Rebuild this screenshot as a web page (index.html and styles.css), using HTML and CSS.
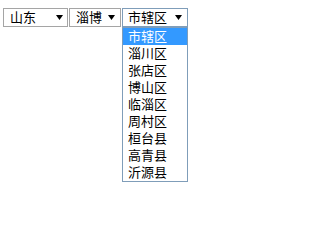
FILE: index.html
```html
<!DOCTYPE html>
<html lang="zh-CN">
<head>
<meta charset="utf-8">
<title>省市区选择</title>
<link rel="stylesheet" href="styles.css">
</head>
<body>
<div class="row">
  <div class="sel sel-prov">
    <span class="val">山东</span>
    <svg class="arrow" width="7" height="5" viewBox="0 0 7 5"><polygon points="0,0 7,0 3.5,5" fill="#000"/></svg>
  </div>
  <div class="sel sel-city">
    <span class="val">淄博</span>
    <svg class="arrow" width="7" height="5" viewBox="0 0 7 5"><polygon points="0,0 7,0 3.5,5" fill="#000"/></svg>
  </div>
  <div class="combo">
    <div class="sel sel-dist focused">
      <span class="val">市辖区</span>
      <svg class="arrow" width="7" height="5" viewBox="0 0 7 5"><polygon points="0,0 7,0 3.5,5" fill="#000"/></svg>
    </div>
    <div class="list">
      <div class="item active">市辖区</div>
      <div class="item">淄川区</div>
      <div class="item">张店区</div>
      <div class="item">博山区</div>
      <div class="item">临淄区</div>
      <div class="item">周村区</div>
      <div class="item">桓台县</div>
      <div class="item">高青县</div>
      <div class="item">沂源县</div>
    </div>
  </div>
</div>
</body>
</html>
```
FILE: styles.css
```css
html, body {
  margin: 0;
  background: #fff;
}
body {
  padding: 8px 0 0 3px;
  font-family: "Liberation Sans", "Noto Sans CJK SC", sans-serif;
  font-size: 13px;
  color: #000;
}
.row {
  display: flex;
  gap: 1px;
  align-items: flex-start;
}
.sel {
  box-sizing: border-box;
  height: 19px;
  border: 1px solid #a5a5a5;
  background: #fff;
  display: flex;
  align-items: center;
  justify-content: space-between;
  padding: 0 4px 0 6px;
}
.sel-prov { width: 65px; }
.sel-city {
  width: 52px;
  padding-right: 5px;
}
.combo {
  width: 66px;
  display: flex;
  flex-direction: column;
}
.sel.focused {
  border-color: #7f9db9;
  padding-left: 5px;
  padding-right: 5px;
}
.val {
  line-height: 17px;
  white-space: nowrap;
}
.arrow {
  display: block;
  flex: none;
}
.list {
  box-sizing: border-box;
  border: 1px solid #7f9db9;
  background: #fff;
}
.item {
  height: 17px;
  line-height: 17px;
  padding-left: 5px;
  white-space: nowrap;
}
.item.active {
  background: #3399ff;
  color: #fff;
}
```
